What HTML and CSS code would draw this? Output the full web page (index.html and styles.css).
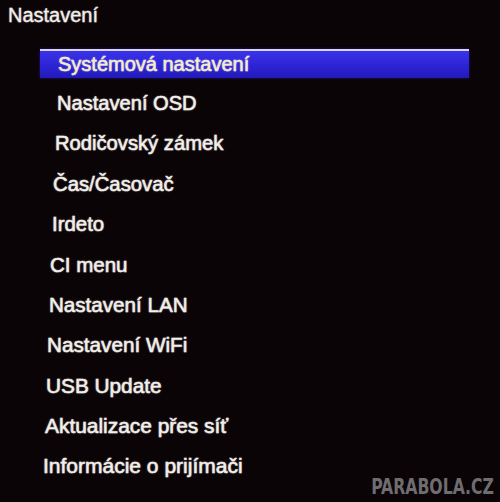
FILE: index.html
```html
<!DOCTYPE html>
<html lang="cs">
<head>
<meta charset="utf-8">
<title>Nastavení</title>
<link rel="stylesheet" href="styles.css">
</head>
<body>
<div class="screen">
  <div class="title">Nastavení</div>
  <ul class="menu">
    <li class="item active"><span class="bar">Systémová nastavení</span></li>
    <li class="item">Nastavení OSD</li>
    <li class="item">Rodičovský zámek</li>
    <li class="item">Čas/Časovač</li>
    <li class="item">Irdeto</li>
    <li class="item">CI menu</li>
    <li class="item">Nastavení LAN</li>
    <li class="item">Nastavení WiFi</li>
    <li class="item">USB Update</li>
    <li class="item">Aktualizace přes síť</li>
    <li class="item">Informácie o prijímači</li>
  </ul>
  <div class="watermark">PARABOLA.CZ</div>
</div>
</body>
</html>
```
FILE: styles.css
```css
html, body {
  margin: 0;
  padding: 0;
  background: #0b0407;
}
.screen {
  position: relative;
  width: 500px;
  height: 502px;
  overflow: hidden;
  background: #0b0407;
  font-family: "Liberation Sans", Arial, sans-serif;
  color: #f3efea;
}
.title {
  padding: 4px 0 0 8px;
  height: 38px;
  box-sizing: border-box;
  font-size: 20px;
  line-height: 22px;
  text-shadow: 0 0 2px rgba(255,255,255,0.45);
  -webkit-text-stroke: 0.3px #f3efea;
}
.menu {
  list-style: none;
  margin: 0;
  padding: 5px 0 0 0;
}
.item {
  height: 40.3px;
  display: flex;
  align-items: center;
  font-size: 20px;
  text-shadow: 0 0 2px rgba(255,255,255,0.55);
  -webkit-text-stroke: 0.5px #f3efea;
}
.item.active { padding-left: 40px; }
.bar {
  display: flex;
  align-items: center;
  width: 429px;
  height: 29px;
  box-sizing: border-box;
  padding-left: 18px;
  padding-top: 1px;
  border-top: 2px solid #d8d6f0;
  background: linear-gradient(180deg, #3b33e8 0%, #2c24d4 55%, #221ab8 100%);
  color: #f5eccc;
  -webkit-text-stroke: 0.5px #f5eccc;
  box-shadow: 0 0 3px rgba(40,30,200,0.6);
}
.item:nth-child(2) { padding-left: 57px; font-size: 20.1px; }
.item:nth-child(3) { padding-left: 55px; font-size: 20.2px; }
.item:nth-child(4) { padding-left: 53px; font-size: 20.3px; }
.item:nth-child(5) { padding-left: 52px; font-size: 20.4px; }
.item:nth-child(6) { padding-left: 50px; font-size: 20.5px; }
.item:nth-child(7) { padding-left: 49px; font-size: 20.6px; }
.item:nth-child(8) { padding-left: 47px; font-size: 20.7px; }
.item:nth-child(9) { padding-left: 46px; font-size: 20.8px; }
.item:nth-child(10) { padding-left: 45px; font-size: 20.9px; }
.item:nth-child(11) { padding-left: 43px; font-size: 21px; }
.watermark {
  position: absolute;
  right: 6px;
  bottom: 3px;
  font-family: "DejaVu Sans", sans-serif;
  font-stretch: condensed;
  font-weight: bold;
  font-size: 21px;
  color: #6f6d70;
  transform: scaleX(0.83);
  transform-origin: right bottom;
}
```
